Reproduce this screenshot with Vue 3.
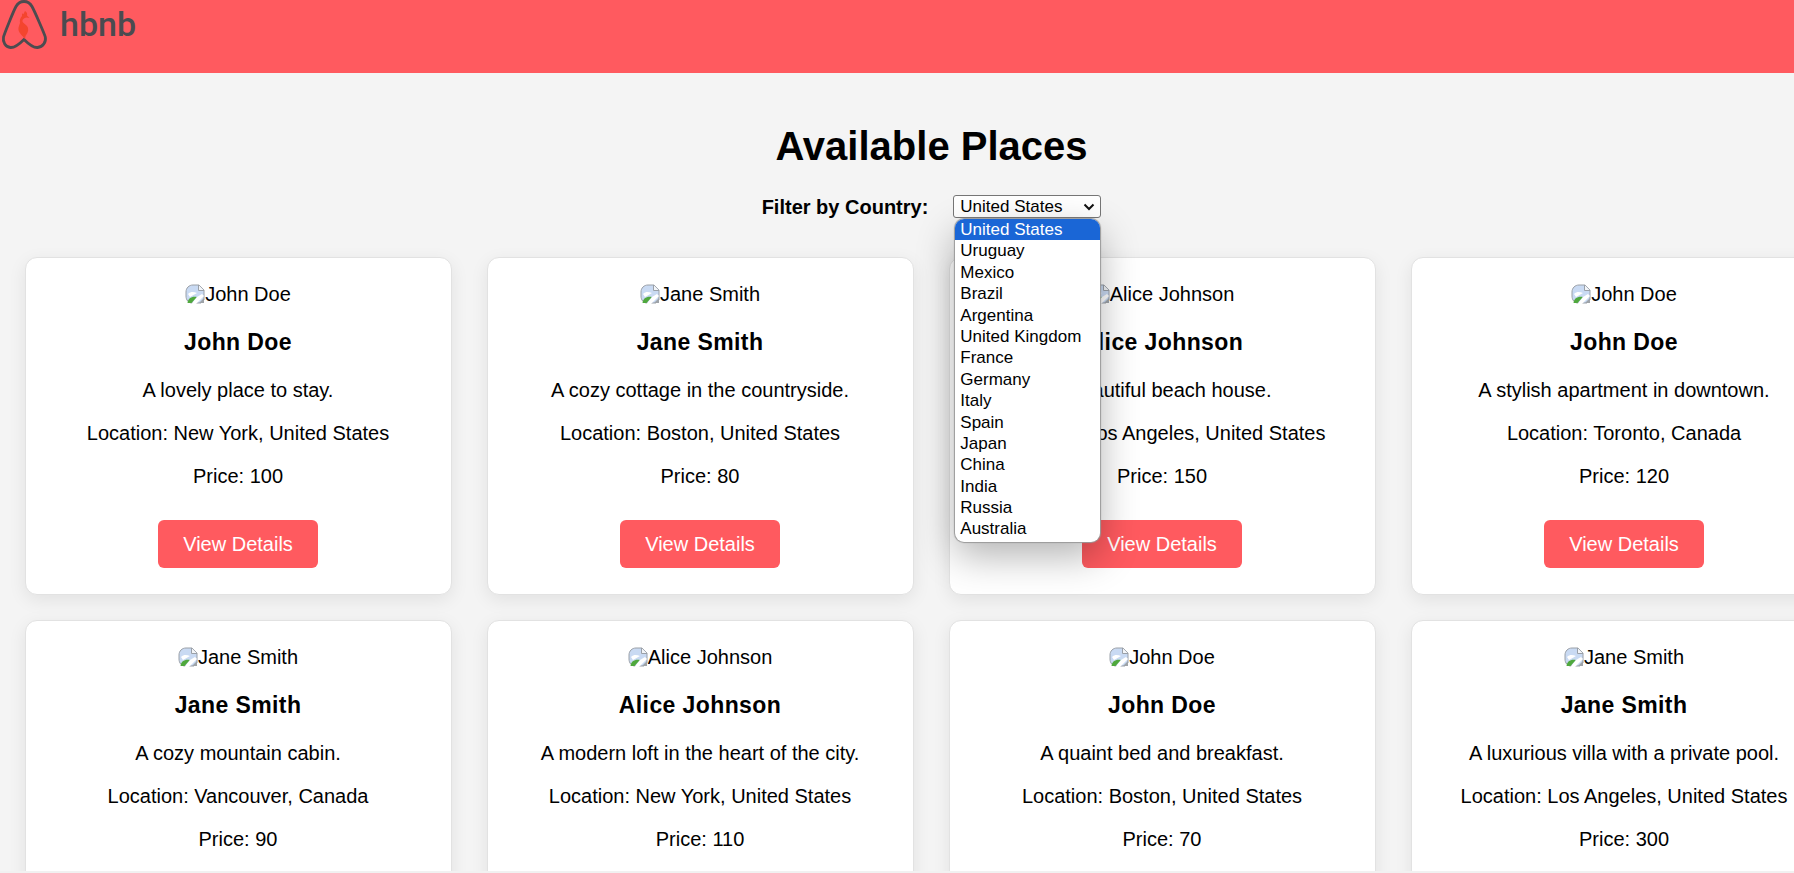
<template>
  <div class="page">
    <header class="site-header">
      <svg class="logo-mark" width="48" height="50" viewBox="0 0 48 50">
        <path
          d="M24 39.500C18 45.500 14.500 47.800 10.500 47.500C5.500 47 2.500 42 3.500 37C4.300 34 13 12 16 6.500C18 2.800 20.500 1.500 24 1.500C27.500 1.500 30 2.800 32 6.500C35 12 44.500 34 45.300 37C46.300 42 43 47 37.500 47.500C33.500 47.800 30 45.500 24 39.500Z"
          fill="none"
          stroke="#4c4c50"
          stroke-width="2.800"
        />
        <path
          d="M25 11C27 12 27.500 14 27 15.500L29.500 18L26.500 17.500C24 18 22 19.500 22.500 21.500C23 23.500 27 24.500 28 28C28.800 31 27 34 25.500 36L25 39C23 36 19.500 34 18.500 30C18 27 19.500 25 20 23C19.500 21 20 18 22 16L22 13.500L23.500 14Z"
          fill="#f4452e"
        />
      </svg>
      <span class="logo-text">hbnb</span>
    </header>

    <main class="content">
      <h1 class="title">Available Places</h1>

      <div class="filter">
        <label class="filter-label">Filter by Country:</label>
        <div class="select-wrap">
          <div class="select-box">
            <span>United States</span>
            <svg width="12" height="8" viewBox="0 0 12 8">
              <path d="M1.500 1.500L6 6L10.500 1.500" fill="none" stroke="#111" stroke-width="2" />
            </svg>
          </div>
          <ul class="select-list">
            <li
              v-for="(country, i) in countries"
              :key="country"
              :class="{ active: i === 0 }"
            >
              {{ country }}
            </li>
          </ul>
        </div>
      </div>

      <section class="places">
        <article v-for="(place, i) in places" :key="i" class="card">
          <div class="thumb">
            <svg class="broken-img" width="20" height="20" viewBox="0 0 20 20">
              <path d="M1 8C1 4 4 1 8 1H14L19 6V16L16 19H7C3.500 19 1 16 1 12Z" fill="#c9daf3" stroke="#9aa0a8" />
              <path d="M13.500 1V6.500H19" fill="#f3f5f8" stroke="#9aa0a8" />
              <path d="M3 10C6 7 9 8 12 9L5 13Z" fill="#fff" />
              <path d="M2.500 19C3 14 7 12 12 13L6.500 19Z" fill="#4fa83d" />
              <path d="M12 13L17 10L19 12L11 20H6.500Z" fill="#fff" />
              <path d="M14 19L19 14V19Z" fill="#9ea3a8" />
            </svg>{{ place.name }}
          </div>
          <h3>{{ place.name }}</h3>
          <p class="description">{{ place.description }}</p>
          <p>Location: {{ place.location }}</p>
          <p>Price: {{ place.price }}</p>
          <button class="details-btn" type="button">View Details</button>
        </article>
      </section>
    </main>
  </div>
</template>

<script setup>
const countries = [
  'United States',
  'Uruguay',
  'Mexico',
  'Brazil',
  'Argentina',
  'United Kingdom',
  'France',
  'Germany',
  'Italy',
  'Spain',
  'Japan',
  'China',
  'India',
  'Russia',
  'Australia',
]

const places = [
  { name: 'John Doe', description: 'A lovely place to stay.', location: 'New York, United States', price: 100 },
  { name: 'Jane Smith', description: 'A cozy cottage in the countryside.', location: 'Boston, United States', price: 80 },
  { name: 'Alice Johnson', description: 'A beautiful beach house.', location: 'Los Angeles, United States', price: 150 },
  { name: 'John Doe', description: 'A stylish apartment in downtown.', location: 'Toronto, Canada', price: 120 },
  { name: 'Jane Smith', description: 'A cozy mountain cabin.', location: 'Vancouver, Canada', price: 90 },
  { name: 'Alice Johnson', description: 'A modern loft in the heart of the city.', location: 'New York, United States', price: 110 },
  { name: 'John Doe', description: 'A quaint bed and breakfast.', location: 'Boston, United States', price: 70 },
  { name: 'Jane Smith', description: 'A luxurious villa with a private pool.', location: 'Los Angeles, United States', price: 300 },
]
</script>

<style>
html,
body {
  margin: 0;
  height: 100%;
  overflow: hidden;
  background: #f1f1f1;
}
</style>

<style scoped>
.page {
  width: 1863px;
  height: 871px;
  overflow: hidden;
  background: #f4f4f4;
  font-family: 'Liberation Sans', Arial, sans-serif;
  color: #000;
}

.site-header {
  height: 73px;
  background: #ff5a5f;
  display: flex;
  align-items: flex-start;
}

.logo-mark {
  flex: none;
}

.logo-text {
  margin: 2px 0 0 12px;
  font-family: Roboto, 'Liberation Sans', sans-serif;
  font-size: 34px;
  font-weight: 500;
  line-height: 44px;
  color: #4b4b50;
}

.content {
  padding: 0 25px;
}

.title {
  margin: 50px 0 0;
  text-align: center;
  font-size: 40px;
  line-height: 47px;
  font-weight: 700;
}

.filter {
  margin-top: 25px;
  display: flex;
  justify-content: center;
  align-items: center;
  gap: 25px;
  height: 23px;
}

.filter-label {
  padding-top: 2px;
  font-size: 20px;
  font-weight: 700;
}

.select-wrap {
  position: relative;
  width: 148px;
}

.select-box {
  box-sizing: border-box;
  height: 23px;
  padding: 1px 5px 0 6px;
  display: flex;
  align-items: center;
  justify-content: space-between;
  background: #fff;
  border: 1px solid #767676;
  border-radius: 3px;
  font-size: 17px;
}

.select-list {
  position: absolute;
  top: 24px;
  left: 2px;
  width: 145px;
  margin: 0;
  padding: 0 0 2px;
  list-style: none;
  background: #fff;
  border-radius: 9px;
  overflow: hidden;
  box-shadow: 0 0 1px 1px #9a9a9a, 0 14px 38px rgba(0, 0, 0, 0.3);
  font-size: 17px;
  z-index: 10;
}

.select-list li {
  height: 21.400px;
  line-height: 21.400px;
  padding-left: 5px;
}

.select-list li.active {
  background: #1a66d6;
  color: #fff;
}

.places {
  margin-top: 39px;
  display: grid;
  grid-template-columns: repeat(4, 427px);
  column-gap: 35px;
  row-gap: 25px;
}

.card {
  box-sizing: border-box;
  height: 338px;
  padding: 25px 21px 0 20px;
  background: #fff;
  border: 1px solid #e2e2e2;
  border-radius: 12px;
  box-shadow: 0 5px 18px rgba(0, 0, 0, 0.08);
  text-align: center;
  font-size: 20px;
  line-height: 23px;
}

.thumb {
  height: 23px;
}

.broken-img {
  vertical-align: -3px;
}

.card h3 {
  margin: 23px 0 0;
  font-size: 23px;
  line-height: 26px;
  font-weight: 700;
  letter-spacing: 0.4px;
}

.card p {
  margin: 20px 0 0;
}

.card p.description {
  margin-top: 24px;
}

.details-btn {
  margin-top: 32px;
  width: 160px;
  height: 48px;
  border: none;
  border-radius: 6px;
  background: #ff5a5f;
  color: #fff;
  font-family: inherit;
  font-size: 20px;
}
</style>
